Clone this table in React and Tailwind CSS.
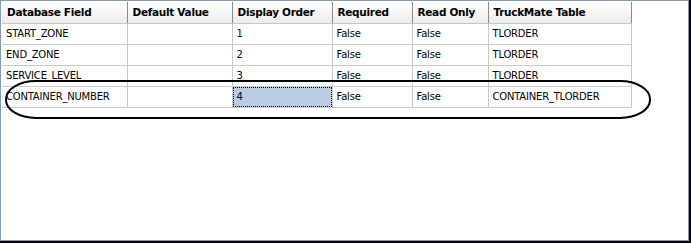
import React from 'react';

const columns = [
  { key: 'field', label: 'Database Field', width: 'w-[125px]' },
  { key: 'def', label: 'Default Value', width: 'w-[105px]' },
  { key: 'order', label: 'Display Order', width: 'w-[100px]' },
  { key: 'req', label: 'Required', width: 'w-[80px]' },
  { key: 'ro', label: 'Read Only', width: 'w-[76px]' },
  { key: 'table', label: 'TruckMate Table', width: 'w-[143px]' },
];

const rows = [
  { field: 'START_ZONE', def: '', order: '1', req: 'False', ro: 'False', table: 'TLORDER' },
  { field: 'END_ZONE', def: '', order: '2', req: 'False', ro: 'False', table: 'TLORDER' },
  { field: 'SERVICE_LEVEL', def: '', order: '3', req: 'False', ro: 'False', table: 'TLORDER' },
  { field: 'CONTAINER_NUMBER', def: '', order: '4', req: 'False', ro: 'False', table: 'CONTAINER_TLORDER' },
];

export default function App() {
  return (
    <div
      className="w-[691px] h-[243px] bg-white border-r-2 border-b-2 border-black flex"
      style={{ fontFamily: '"DejaVu Sans", Verdana, sans-serif' }}
    >
      <div className="relative flex-1 border border-[#7f9db9] p-px bg-white">
        <table className="w-[629px] border-collapse table-fixed text-[10px] text-black">
          <colgroup>
            {columns.map((c) => (
              <col key={c.key} className={c.width} />
            ))}
          </colgroup>
          <thead>
            <tr className="h-[21px] bg-gradient-to-b from-white to-[#ececec]">
              {columns.map((c) => (
                <th
                  key={c.key}
                  className="p-0 pl-[5px] text-left font-bold text-[10.5px] tracking-[-0.3px] border-r border-b border-r-[#8a8a8a] border-b-[#c6c6c6] leading-none whitespace-nowrap overflow-hidden"
                >
                  {c.label}
                </th>
              ))}
            </tr>
          </thead>
          <tbody>
            {rows.map((r, i) => (
              <tr key={i} className="h-[21px]">
                {columns.map((c) => {
                  const selected = i === 3 && c.key === 'order';
                  return (
                    <td
                      key={c.key}
                      className="p-0 border-r border-b border-[#c9c9c9] leading-none whitespace-nowrap overflow-hidden tracking-[-0.2px]"
                    >
                      {selected ? (
                        <div className="h-[20px] bg-[#b8cce4] border border-dotted border-black flex items-center pl-[3px]">
                          {r[c.key]}
                        </div>
                      ) : (
                        <div className="pl-[4px]">{r[c.key]}</div>
                      )}
                    </td>
                  );
                })}
              </tr>
            ))}
          </tbody>
        </table>

        {/* hand-drawn marker around the last row */}
        <svg
          className="absolute left-[3px] top-[78px] pointer-events-none"
          width="650"
          height="42"
          viewBox="0 0 650 42"
        >
          <rect x="2" y="2" width="644" height="37" rx="30" ry="18" fill="none" stroke="#000" strokeWidth="2" />
        </svg>
      </div>
    </div>
  );
}
